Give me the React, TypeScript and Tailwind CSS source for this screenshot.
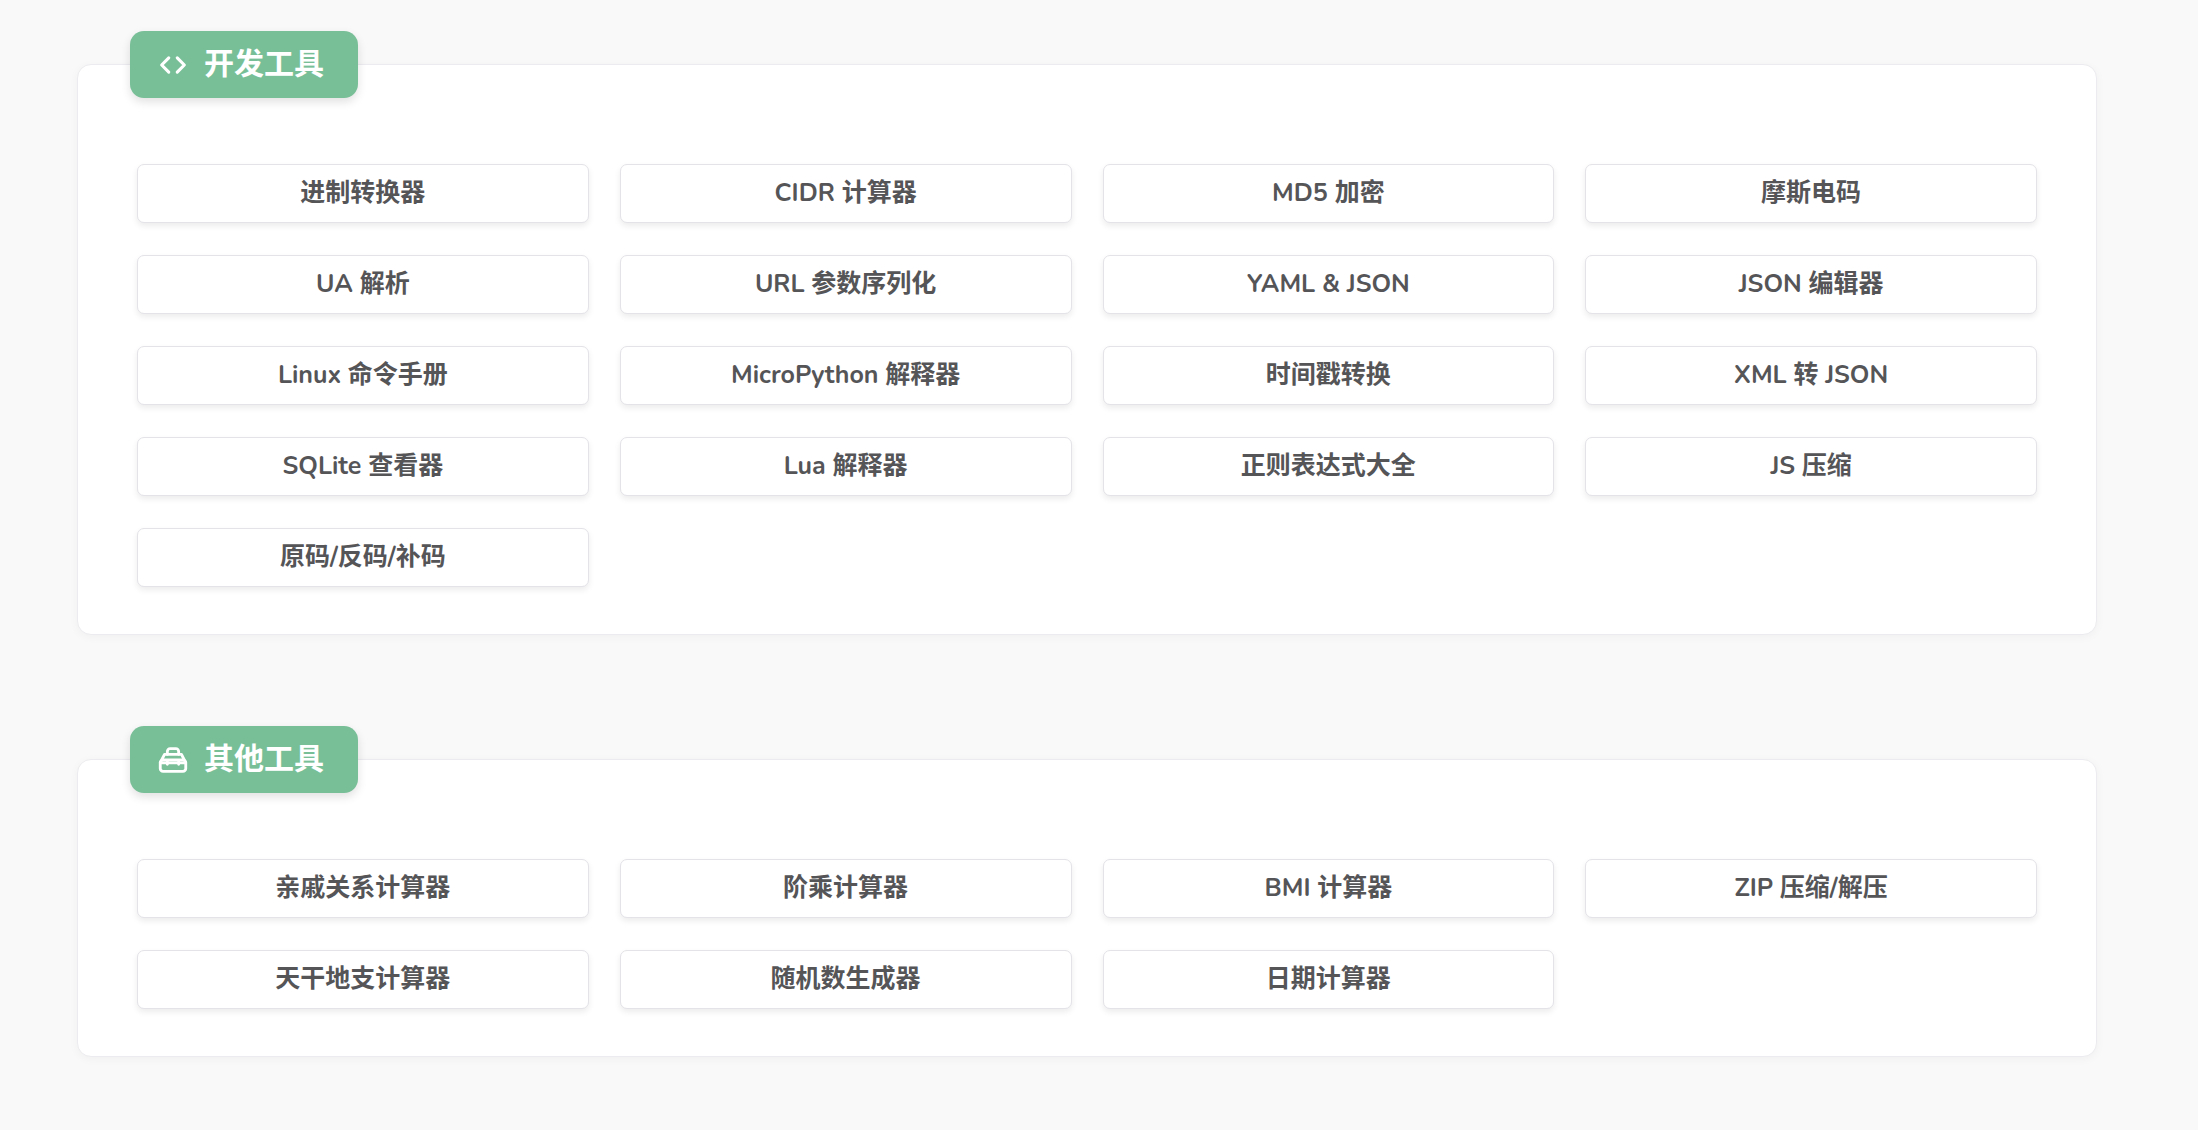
import React from "react";

const dev = ["进制转换器","CIDR 计算器","MD5 加密","摩斯电码","UA 解析","URL 参数序列化","YAML & JSON","JSON 编辑器","Linux 命令手册","MicroPython 解释器","时间戳转换","XML 转 JSON","SQLite 查看器","Lua 解释器","正则表达式大全","JS 压缩","原码/反码/补码"];
const other = ["亲戚关系计算器","阶乘计算器","BMI 计算器","ZIP 压缩/解压","天干地支计算器","随机数生成器","日期计算器"];

const CodeIcon = () => (
  <svg width="34" height="34" viewBox="0 0 24 24" fill="none" stroke="white" strokeWidth="2.2" strokeLinecap="round" strokeLinejoin="round">
    <path d="M9 7l-5 5 5 5" /><path d="M15 7l5 5-5 5" />
  </svg>
);
const BoxIcon = () => (
  <svg width="34" height="34" viewBox="0 0 24 24" fill="none" stroke="white" strokeWidth="2" strokeLinecap="round" strokeLinejoin="round">
    <path d="M8 8V6a2 2 0 0 1 2-2h4a2 2 0 0 1 2 2v2" />
    <path d="M4 12l2-4h12l2 4" />
    <rect x="3" y="12" width="18" height="8" rx="2" />
    <path d="M3 14h18" />
    <path d="M8 13v2M16 13v2" />
  </svg>
);

function Section({ title, icon, items }: { title: string; icon: React.ReactNode; items: string[] }) {
  return (
    <div className="relative bg-white rounded-[14px] border border-[#ececf0] shadow-[0_2px_10px_rgba(0,0,0,0.04)] px-[59px] pt-[99px] pb-[47px]">
      <div className="absolute left-[52px] top-[-34px] h-[67px] w-[228px] rounded-[14px] bg-[#78bf98] shadow-[0_4px_10px_rgba(0,0,0,0.12)] flex items-center pl-[26px] gap-[14px]">
        {icon}
        <span className="text-white text-[30px] font-bold leading-none">{title}</span>
      </div>
      <div className="grid grid-cols-4 gap-x-[31px] gap-y-[32px]">
        {items.map((t) => (
          <div key={t} className="h-[59px] rounded-[7px] border border-[#e3e3e8] bg-white shadow-[0_3px_6px_rgba(0,0,0,0.08)] flex items-center justify-center text-[25px] font-bold text-[#555558]">
            {t}
          </div>
        ))}
      </div>
    </div>
  );
}

export default function App() {
  return (
    <div className="min-h-[1130px] bg-[#f9f9f9] pt-[64px] pl-[77px] pr-[101px]" style={{ fontFamily: '"Nunito", "Noto Sans CJK SC", "Noto Sans", sans-serif' }}>
      <div className="flex flex-col gap-[124px]">
        <Section title="开发工具" icon={<CodeIcon />} items={dev} />
        <Section title="其他工具" icon={<BoxIcon />} items={other} />
      </div>
    </div>
  );
}
